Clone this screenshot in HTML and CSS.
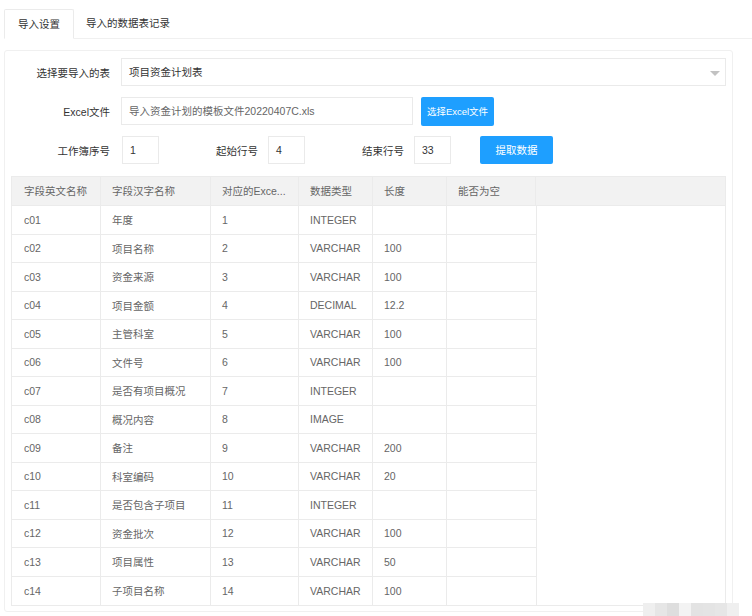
FILE: index.html
```html
<!DOCTYPE html>
<html lang="zh">
<head>
<meta charset="utf-8">
<title>导入设置</title>
<link rel="stylesheet" href="styles.css">
</head>
<body>
<div class="tabs">
  <div class="tab active">导入设置</div>
  <div class="tab">导入的数据表记录</div>
  <div class="tab-fill"></div>
</div>
<div class="panel">
  <div class="row">
    <div class="label">选择要导入的表</div>
    <div class="select">
      <span>项目资金计划表</span>
      <i class="caret"></i>
    </div>
  </div>
  <div class="row">
    <div class="label">Excel文件</div>
    <div class="input file">导入资金计划的模板文件20220407C.xls</div>
    <div class="btn btn-sm">选择Excel文件</div>
  </div>
  <div class="row">
    <div class="label first">工作簿序号</div>
    <div class="input num">1</div>
    <div class="label mid">起始行号</div>
    <div class="input num">4</div>
    <div class="label mid">结束行号</div>
    <div class="input num">33</div>
    <div class="btn btn-go">提取数据</div>
  </div>
  <div class="tbl">
    <div class="thead">
      <div class="c w1">字段英文名称</div>
      <div class="c w2">字段汉字名称</div>
      <div class="c w3">对应的Exce...</div>
      <div class="c w4">数据类型</div>
      <div class="c w5">长度</div>
      <div class="c w6">能否为空</div>
      <div class="c rest"></div>
    </div>
    <div class="tbody">
      <div class="tr"><div class="c w1">c01</div><div class="c w2">年度</div><div class="c w3">1</div><div class="c w4">INTEGER</div><div class="c w5"></div><div class="c w6"></div></div>
      <div class="tr"><div class="c w1">c02</div><div class="c w2">项目名称</div><div class="c w3">2</div><div class="c w4">VARCHAR</div><div class="c w5">100</div><div class="c w6"></div></div>
      <div class="tr"><div class="c w1">c03</div><div class="c w2">资金来源</div><div class="c w3">3</div><div class="c w4">VARCHAR</div><div class="c w5">100</div><div class="c w6"></div></div>
      <div class="tr"><div class="c w1">c04</div><div class="c w2">项目金额</div><div class="c w3">4</div><div class="c w4">DECIMAL</div><div class="c w5">12.2</div><div class="c w6"></div></div>
      <div class="tr"><div class="c w1">c05</div><div class="c w2">主管科室</div><div class="c w3">5</div><div class="c w4">VARCHAR</div><div class="c w5">100</div><div class="c w6"></div></div>
      <div class="tr"><div class="c w1">c06</div><div class="c w2">文件号</div><div class="c w3">6</div><div class="c w4">VARCHAR</div><div class="c w5">100</div><div class="c w6"></div></div>
      <div class="tr"><div class="c w1">c07</div><div class="c w2">是否有项目概况</div><div class="c w3">7</div><div class="c w4">INTEGER</div><div class="c w5"></div><div class="c w6"></div></div>
      <div class="tr"><div class="c w1">c08</div><div class="c w2">概况内容</div><div class="c w3">8</div><div class="c w4">IMAGE</div><div class="c w5"></div><div class="c w6"></div></div>
      <div class="tr"><div class="c w1">c09</div><div class="c w2">备注</div><div class="c w3">9</div><div class="c w4">VARCHAR</div><div class="c w5">200</div><div class="c w6"></div></div>
      <div class="tr"><div class="c w1">c10</div><div class="c w2">科室编码</div><div class="c w3">10</div><div class="c w4">VARCHAR</div><div class="c w5">20</div><div class="c w6"></div></div>
      <div class="tr"><div class="c w1">c11</div><div class="c w2">是否包含子项目</div><div class="c w3">11</div><div class="c w4">INTEGER</div><div class="c w5"></div><div class="c w6"></div></div>
      <div class="tr"><div class="c w1">c12</div><div class="c w2">资金批次</div><div class="c w3">12</div><div class="c w4">VARCHAR</div><div class="c w5">100</div><div class="c w6"></div></div>
      <div class="tr"><div class="c w1">c13</div><div class="c w2">项目属性</div><div class="c w3">13</div><div class="c w4">VARCHAR</div><div class="c w5">50</div><div class="c w6"></div></div>
      <div class="tr"><div class="c w1">c14</div><div class="c w2">子项目名称</div><div class="c w3">14</div><div class="c w4">VARCHAR</div><div class="c w5">100</div><div class="c w6"></div></div>
    </div>
  </div>
</div>
<div class="mosaic">
  <i class="m1"></i><i class="m2"></i><i class="m3"></i><i class="m4"></i><i class="m5"></i><i class="m6"></i><i class="m7"></i><i class="m8"></i>
</div>
</body>
</html>
```

FILE: styles.css
```css
html, body {
  margin: 0;
  padding: 0;
  background: #fff;
}
body {
  width: 752px;
  height: 616px;
  overflow: hidden;
  position: relative;
  font-family: "Liberation Sans", "Noto Sans CJK SC", sans-serif;
  font-size: 10.5px;
  color: #333;
}
.tabs {
  display: flex;
  margin-top: 9px;
  height: 30px;
  padding-left: 4px;
}
.tab {
  height: 29px;
  line-height: 28px;
  padding: 0 12px;
  border-bottom: 1px solid #f0f0f0;
  color: #333;
  white-space: nowrap;
}
.tab.active {
  padding: 0 13px;
  border: 1px solid #ebebeb;
  border-bottom: 1px solid #fff;
  border-radius: 2px 2px 0 0;
  height: 28px;
}
.tab-fill {
  flex: 1;
  border-bottom: 1px solid #f0f0f0;
  height: 29px;
}
.panel {
  margin: 11px 0 0 4px;
  width: 729px;
  border: 1px solid #f0f0f0;
  border-radius: 3px;
  padding-top: 7px;
  box-sizing: border-box;
  height: 562px;
}
.row {
  display: flex;
  align-items: center;
  height: 28px;
  margin-bottom: 11px;
}
.label {
  width: 105px;
  margin-right: 11px;
  text-align: right;
  color: #333;
  white-space: nowrap;
  flex: none;
}
.label.first {
  margin-right: 12px;
}
.label.mid {
  width: 99px;
  margin-right: 10px;
}
.select, .input {
  height: 28px;
  box-sizing: border-box;
  border: 1px solid #eaeaea;
  background: #fff;
  line-height: 26px;
  padding-left: 7px;
  white-space: nowrap;
  flex: none;
}
.select {
  width: 605px;
  position: relative;
  color: #333;
}
.caret {
  position: absolute;
  right: 5px;
  top: 12px;
  width: 0;
  height: 0;
  border-left: 5px solid transparent;
  border-right: 5px solid transparent;
  border-top: 5px solid #c2c2c2;
}
.input.file {
  width: 292px;
  color: #666;
}
.input.num {
  width: 37px;
  color: #333;
}
.btn {
  background: #1e9fff;
  color: #fff;
  text-align: center;
  border-radius: 2px;
  white-space: nowrap;
  flex: none;
}
.btn-sm {
  margin-left: 8px;
  width: 73px;
  height: 29px;
  line-height: 29px;
  font-size: 9.5px;
}
.btn-go {
  margin-left: 29px;
  width: 73px;
  height: 28px;
  line-height: 28px;
}
.tbl {
  margin: 12px 0 0 6px;
  width: 715px;
  border: 1px solid #ebebeb;
  box-sizing: border-box;
  color: #666;
}
.thead {
  display: flex;
  height: 29px;
  background: #f2f2f2;
  border-bottom: 1px solid #ebebeb;
  box-sizing: border-box;
}
.tr {
  display: flex;
  height: 28.5px;
  box-sizing: border-box;
  border-bottom: 1px solid #ebebeb;
  width: 524px;
}
.tbody .tr:last-child {
  border-bottom: none;
}
.tbody {
  width: 524px;
  border-right: 1px solid #ebebeb;
}
.c {
  box-sizing: border-box;
  padding-left: 11px;
  display: flex;
  align-items: center;
  white-space: nowrap;
  overflow: hidden;
  border-right: 1px solid #ebebeb;
  flex: none;
}
.thead .c {
  display: block;
  line-height: 28px;
}
.c.w1 { width: 89px; padding-left: 12px; }
.c.w2 { width: 110px; }
.c.w3 { width: 88px; }
.c.w4 { width: 74px; }
.c.w5 { width: 74px; }
.c.w6 { width: 88px; border-right: none; }
.thead .c.w6 { width: 89px; border-right: 1px solid #ebebeb; }
.c.rest { flex: 1; border-right: none; }
.mosaic {
  position: absolute;
  left: 643px;
  top: 603px;
  display: flex;
  height: 13px;
}
.mosaic i {
  display: block;
  width: 12px;
  height: 13px;
}
.m1 { background: #efefef; }
.m2 { background: #e6e6e6; }
.m3 { background: #dedede; }
.m4 { background: #f3f3f3; }
.m5 { background: #e3e3e3; }
.m6 { background: #e4e4e4; }
.m7 { background: #e6e6e6; }
.m8 { background: #efefef; }
```
